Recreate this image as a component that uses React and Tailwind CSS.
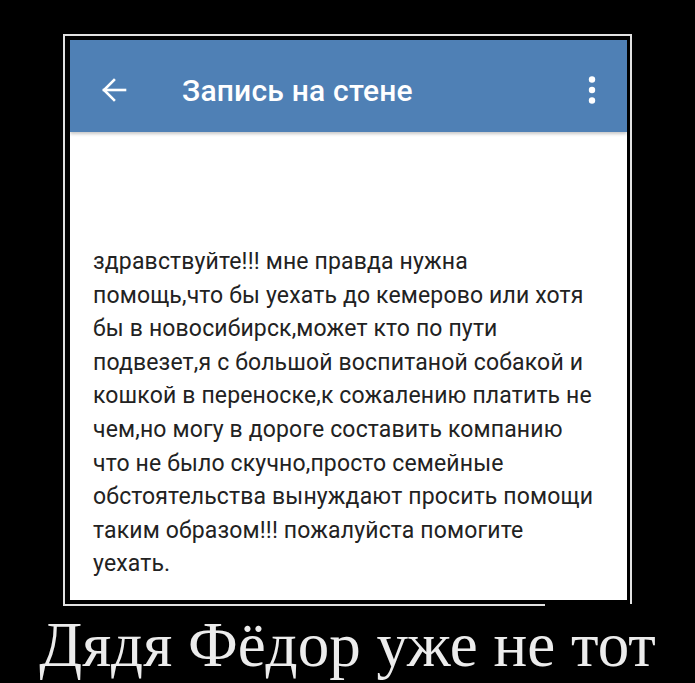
import React from 'react';

const lines = [
  'здравствуйте!!! мне правда нужна',
  'помощь,что бы уехать до кемерово или хотя',
  'бы в новосибирск,может кто по пути',
  'подвезет,я с большой воспитаной собакой и',
  'кошкой в переноске,к сожалению платить не',
  'чем,но могу в дороге составить компанию',
  'что не было скучно,просто семейные',
  'обстоятельства вынуждают просить помощи',
  'таким образом!!! пожалуйста помогите',
  'уехать.',
];

const BackArrow = () => (
  <svg width="26" height="26" viewBox="0 0 26 26" fill="none" stroke="white" strokeWidth="2.6" strokeLinecap="square">
    <path d="M24 13H3" />
    <path d="M13 3L3 13L13 23" />
  </svg>
);

const Kebab = () => (
  <svg width="8" height="28" viewBox="0 0 8 28" fill="white">
    <circle cx="4" cy="3.5" r="3.2" />
    <circle cx="4" cy="14" r="3.2" />
    <circle cx="4" cy="24.5" r="3.2" />
  </svg>
);

export default function App() {
  return (
    <div className="w-[695px] h-[683px] bg-black overflow-hidden pt-[34px]">
      {/* demotivator frame */}
      <div className="ml-[63px] w-[569px] border-x-2 border-t-2 border-[#e2e2e2] pl-[5px] pr-[3px] pt-[4px] pb-[4px]">
        <div className="w-[557px] h-[560px] bg-white flex flex-col">
          <div className="h-[92px] bg-[#4f80b5] flex items-center pt-[8px] shadow-[0_2px_3px_rgba(0,0,0,0.22)] relative">
            <div className="ml-[31px] flex items-center">
              <BackArrow />
            </div>
            <div
              className="ml-[55px] text-white text-[30px] font-medium tracking-[0.2px]"
              style={{ fontFamily: 'Roboto, "Noto Sans", sans-serif' }}
            >
              Запись на стене
            </div>
            <div className="ml-auto mr-[31px] flex items-center">
              <Kebab />
            </div>
          </div>
          <div
            className="pl-[23px] pt-[113px] text-[23px] leading-[33.6px] tracking-[0.15px] text-[#222222]"
            style={{ fontFamily: 'Roboto, "Noto Sans", sans-serif' }}
          >
            {lines.map((l) => (
              <div key={l} className="whitespace-nowrap">{l}</div>
            ))}
          </div>
        </div>
      </div>
      <div className="ml-[63px] w-[482px] h-[2px] bg-[#e2e2e2]" />
      <div
        className="mt-[8px] text-center text-[63px] leading-none text-[#ececec] whitespace-nowrap"
        style={{ fontFamily: '"Liberation Serif", "Times New Roman", serif' }}
      >
        Дядя Фёдор уже не тот
      </div>
    </div>
  );
}
